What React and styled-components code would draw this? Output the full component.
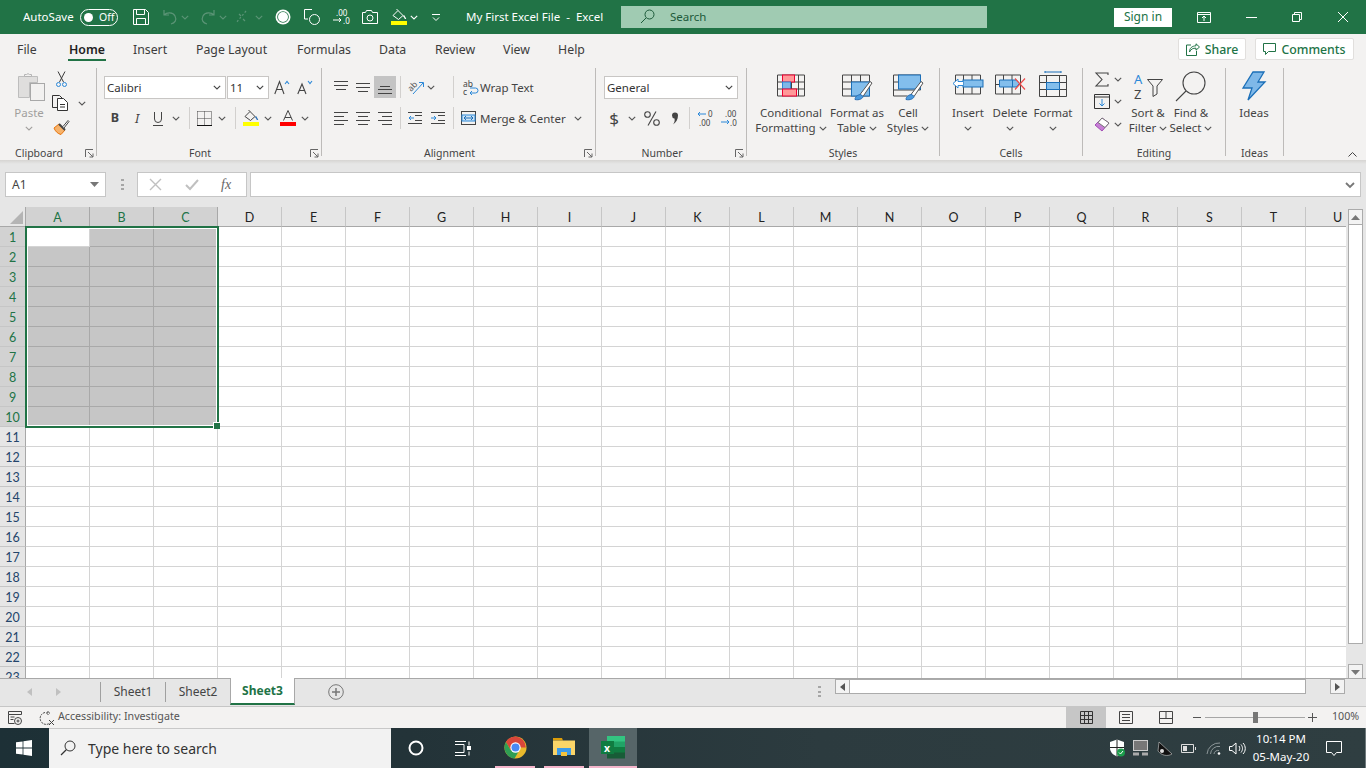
import React from "react";
import styled, { createGlobalStyle } from "styled-components";

const ui = `"Noto Sans", "Open Sans", sans-serif`;
const calibri = `Lato, "Noto Sans", sans-serif`;

const Global = createGlobalStyle`
  html, body { margin: 0; padding: 0; height: 768px; overflow: hidden; background: #e6e6e6; }
  * { box-sizing: border-box; }
  svg { display: block; overflow: visible; }
`;

const Page = styled.div`
  width: 1366px;
  height: 768px;
  display: flex;
  flex-direction: column;
  font-family: ${ui};
  overflow: hidden;
`;

// a fixed width thing in a row, $ml is the distance to what stands before it
const Item = styled.div`
  flex: none;
  display: flex;
  align-items: center;
  justify-content: center;
  width: ${(p) => p.$w}px;
  height: ${(p) => p.$h || 22}px;
  margin-left: ${(p) => p.$ml || 0}px;
  background: ${(p) => p.$bg || "transparent"};
`;

const TitleBar = styled.div`
  height: 34px;
  background: #217346;
  display: flex;
  align-items: center;
  padding-left: 23px;
  color: #fff;
  font-size: 11.5px;
`;
const TitleText = styled.div`
  flex: none;
  width: ${(p) => p.$w}px;
  margin-left: ${(p) => p.$ml || 0}px;
  margin-bottom: 2px;
  white-space: pre;
`;
const Toggle = styled.div`
  flex: none;
  width: 38px;
  height: 17px;
  margin-left: 7px;
  border: 1px solid #fff;
  border-radius: 9px;
  display: flex;
  align-items: center;
  padding: 0 0 1px 3px;
  gap: 6px;
  font-size: 10.5px;
  &::before {
    content: "";
    width: 9px;
    height: 9px;
    margin-top: 1px;
    border-radius: 50%;
    background: #fff;
  }
`;
const SearchBox = styled.div`
  flex: none;
  width: 366px;
  height: 22px;
  margin-left: 18px;
  background: #a0cbb2;
  color: #1d5a3a;
  display: flex;
  align-items: center;
  padding: 0 0 1px 19px;
  gap: 15px;
  font-size: 11.5px;
`;
const SignIn = styled.div`
  flex: none;
  width: 58px;
  height: 19px;
  margin-left: 127px;
  padding-bottom: 1px;
  background: #fff;
  color: #217346;
  font-size: 12px;
  display: flex;
  align-items: center;
  justify-content: center;
`;

const TabRow = styled.div`
  height: 32px;
  background: #f3f2f1;
  display: flex;
  align-items: flex-start;
  padding-right: 13px;
`;
const Tab = styled.div`
  flex: none;
  height: 27px;
  width: ${(p) => p.$w}px;
  margin-left: ${(p) => p.$ml}px;
  padding-top: 7px;
  font-size: 12.3px;
  line-height: 18px;
  color: ${(p) => (p.$on ? "#1f1f1f" : "#3c3c3c")};
  font-weight: ${(p) => (p.$on ? 600 : 400)};
  text-align: center;
  white-space: nowrap;
  border-bottom: 2px solid ${(p) => (p.$on ? "#217346" : "transparent")};
`;
const ActionBtn = styled.div`
  flex: none;
  height: 22px;
  margin-top: 4px;
  width: ${(p) => p.$w}px;
  margin-left: ${(p) => p.$ml}px;
  background: #fff;
  border: 1px solid #e1dfdd;
  border-radius: 2px;
  color: #217346;
  font-size: 12.3px;
  font-weight: 500;
  display: flex;
  align-items: center;
  justify-content: center;
  gap: 5px;
`;

const Ribbon = styled.div`
  height: 94px;
  background: #f3f2f1;
  display: flex;
`;
const Group = styled.div`
  flex: none;
  width: ${(p) => p.$w}px;
  height: 88px;
  margin-top: 2px;
  border-right: 1px solid #bdbbb9;
  display: flex;
  flex-direction: column;
`;
const GroupBody = styled.div`
  height: 79px;
  display: flex;
  margin-top: -2px;
  flex: none;
`;
const GroupLabel = styled.div`
  height: 16px;
  flex: none;
  display: flex;
  align-items: center;
  font-size: 10.5px;
  color: #444;
`;
const LabelText = styled.div`
  flex: 1;
  text-align: center;
  padding-right: ${(p) => (p.$pad ? 4 : 0)}px;
`;
const Launcher = styled.div`
  flex: none;
  width: 14px;
  display: flex;
  justify-content: center;
`;
const Rows = styled.div`
  display: flex;
  flex-direction: column;
  gap: 9px;
  padding-top: 10px;
  padding-left: ${(p) => p.$pl}px;
`;
const Row = styled.div`
  display: flex;
  align-items: center;
  height: 22px;
`;
const Combo = styled.div`
  flex: none;
  width: ${(p) => p.$w}px;
  height: 23px;
  margin-left: ${(p) => p.$ml || 0}px;
  background: #fff;
  border: 1px solid #c8c6c4;
  display: flex;
  align-items: center;
  justify-content: space-between;
  padding: 0 4px 0 2px;
  font-size: 11.5px;
  color: #333;
`;
const Sep = styled.div`
  flex: none;
  width: 1px;
  height: 22px;
  margin-left: ${(p) => p.$ml}px;
  background: #d2d0ce;
`;
const SmallText = styled.div`
  flex: none;
  width: ${(p) => p.$w}px;
  margin-left: ${(p) => p.$ml || 0}px;
  font-size: 11.5px;
  color: #444;
  white-space: nowrap;
`;
const Glyph = styled.span`
  font-size: ${(p) => p.$size}px;
  font-weight: ${(p) => (p.$bold ? 700 : 400)};
  font-style: ${(p) => (p.$italic ? "italic" : "normal")};
  color: #444;
  line-height: 1;
`;
const BigBtn = styled.div`
  flex: none;
  width: ${(p) => p.$w}px;
  margin-left: ${(p) => p.$ml || 0}px;
  display: flex;
  flex-direction: column;
  align-items: center;
  padding-top: 5px;
  font-size: 11.5px;
  line-height: 16px;
  color: ${(p) => (p.$off ? "#a19f9d" : "#444")};
  white-space: nowrap;
`;
const BigIcon = styled.div`
  height: 34px;
  padding-bottom: 4px;
  display: flex;
  align-items: flex-start;
  justify-content: center;
`;
const BigLine = styled.div`
  height: 15.5px;
  display: flex;
  align-items: center;
  gap: 3px;
`;
const SmallCol = styled.div`
  flex: none;
  margin-left: ${(p) => p.$ml}px;
  padding-top: 2px;
  display: flex;
  flex-direction: column;
  gap: ${(p) => p.$gap}px;
`;
const Collapse = styled.div`
  margin-left: auto;
  margin-right: 9px;
  margin-top: 85px;
  height: 6px;
`;
const RibbonEdge = styled.div`
  height: 4px;
  background: linear-gradient(#d6d4d2, #e6e6e6);
`;

const FormulaBar = styled.div`
  height: 43px;
  background: #e6e6e6;
  display: flex;
  padding: 8px 5px 0;
`;
const NameBox = styled.div`
  flex: none;
  width: 101px;
  height: 25px;
  background: #fff;
  border: 1px solid #c6c6c6;
  display: flex;
  align-items: center;
  justify-content: space-between;
  padding: 0 6px;
  font-size: 12px;
  color: #444;
`;
const Grip = styled.div`
  flex: none;
  width: 3px;
  margin-left: ${(p) => p.$ml}px;
  margin-top: ${(p) => p.$mt}px;
  height: 11px;
  background: repeating-linear-gradient(#a6a6a6 0 2px, transparent 2px 4.5px);
`;
const FxBox = styled.div`
  flex: none;
  width: 110px;
  height: 25px;
  margin-left: 13px;
  background: #fff;
  border: 1px solid #c6c6c6;
  display: flex;
  align-items: center;
`;
const FormulaInput = styled.div`
  flex: none;
  width: 1111px;
  height: 25px;
  margin-left: 3px;
  background: #fff;
  border: 1px solid #c6c6c6;
  display: flex;
  align-items: center;
  justify-content: flex-end;
  padding-right: 5px;
`;

const SheetArea = styled.div`
  height: 471px;
  display: flex;
  background: #e6e6e6;
`;
const GridWrap = styled.div`
  position: relative;
  flex: none;
  width: 1346px;
  height: 471px;
  overflow: hidden;
  background: #fff;
`;
const Grid = styled.div`
  display: grid;
  grid-template-columns: 26px repeat(21, 64px);
  grid-auto-rows: 20px;
`;
const Corner = styled.div`
  background: #e6e6e6;
  border-right: 1px solid #a8a8a8;
  border-bottom: 1px solid #a8a8a8;
  display: flex;
  align-items: flex-end;
  justify-content: flex-end;
  padding: 0 2px 2px 0;
`;
const ColHead = styled.div`
  background: ${(p) => (p.$sel ? "#d2d2d2" : "#e6e6e6")};
  color: ${(p) => (p.$sel ? "#217346" : "#222")};
  border-right: 1px solid ${(p) => (p.$sel ? "#a8a8a8" : "#c6c6c6")};
  border-bottom: 1px solid #a8a8a8;
  padding-top: 1px;
  font-family: ${calibri};
  font-size: 12.5px;
  display: flex;
  align-items: center;
  justify-content: center;
`;
const RowHead = styled.div`
  background: ${(p) => (p.$sel ? "#d2d2d2" : "#e6e6e6")};
  color: ${(p) => (p.$sel ? "#217346" : "#24456b")};
  border-right: 1px solid #a8a8a8;
  border-bottom: 1px solid #c6c6c6;
  padding-top: 1px;
  font-family: ${calibri};
  font-size: 12.5px;
  display: flex;
  align-items: center;
  justify-content: center;
`;
const Cell = styled.div`
  background: ${(p) => (p.$sel ? "#c6c6c6" : "#fff")};
  border-right: 1px solid ${(p) => (p.$sel ? "#a9a9a9" : "#d4d4d4")};
  border-bottom: 1px solid ${(p) => (p.$sel ? "#a9a9a9" : "#d4d4d4")};
`;
const Selection = styled.div`
  position: absolute;
  left: 25px;
  top: 19px;
  width: 194px;
  height: 202px;
  border: 2px solid #217346;
  box-shadow: inset 0 0 0 1px #fff;
  pointer-events: none;
  &::after {
    content: "";
    position: absolute;
    right: -3px;
    bottom: -3px;
    width: 6px;
    height: 6px;
    background: #217346;
    border: 1px solid #fff;
    border-width: 1px 0 0 1px;
  }
`;
const VScroll = styled.div`
  flex: none;
  width: 20px;
  padding: 2px 3px 0 2px;
  display: flex;
  flex-direction: column;
`;
const ScrollBtn = styled.div`
  flex: none;
  width: ${(p) => p.$w || 15}px;
  height: ${(p) => p.$h || 16}px;
  background: #f3f3f3;
  border: 1px solid #ababab;
  display: flex;
  align-items: center;
  justify-content: center;
`;
const VThumb = styled.div`
  flex: none;
  width: 15px;
  height: 419px;
  background: #fff;
  border: 1px solid #ababab;
  border-top: 0;
`;
const Spacer = styled.div`
  flex: none;
  height: ${(p) => p.$h}px;
`;

const SheetBar = styled.div`
  height: 29px;
  background: #e6e6e6;
  border-top: 1px solid #a8a8a8;
  border-bottom: 1px solid #c6c6c6;
  display: flex;
  align-items: flex-start;
`;
const SheetTab = styled.div`
  flex: none;
  width: 65px;
  margin-top: ${(p) => (p.$on ? -1 : 3)}px;
  height: ${(p) => (p.$on ? 27 : 20)}px;
  padding-bottom: ${(p) => (p.$on ? 0 : 1)}px;
  background: ${(p) => (p.$on ? "#fff" : "transparent")};
  color: ${(p) => (p.$on ? "#217346" : "#444")};
  font-weight: ${(p) => (p.$on ? 700 : 400)};
  border-left: 1px solid ${(p) => (p.$on ? "#a8a8a8" : "#a0a0a0")};
  border-right: ${(p) => (p.$on ? "1px solid #a8a8a8" : "0")};
  border-bottom: ${(p) => (p.$on ? "2px solid #217346" : "0")};
  font-size: 12px;
  display: flex;
  align-items: center;
  justify-content: center;
`;
const HTrack = styled.div`
  flex: none;
  width: 456px;
  height: 15px;
  background: #fff;
  border: 1px solid #ababab;
  border-left: 0;
`;

const StatusBar = styled.div`
  height: 21px;
  background: #f3f2f1;
  display: flex;
  align-items: center;
  font-size: 10.5px;
  color: #555;
`;
const StatusText = styled.div`
  flex: none;
  width: ${(p) => p.$w}px;
  margin-left: ${(p) => p.$ml}px;
  margin-bottom: 3px;
  font-size: 10.7px;
  white-space: nowrap;
  color: #555;
`;
const ZoomTrack = styled.div`
  position: relative;
  flex: none;
  width: 100px;
  height: 1px;
  margin-left: 4px;
  background: #a6a6a6;
  &::after {
    content: "";
    position: absolute;
    left: 48px;
    top: -5px;
    width: 5px;
    height: 11px;
    background: #777;
  }
`;

const Taskbar = styled.div`
  height: 40px;
  display: flex;
  align-items: center;
  color: #fff;
  border-right: 1px solid #6f7a7d;
  background: linear-gradient(90deg, #1d3036 0%, #233338 30%, #2c3b3f 60%, #2f3e41 100%);
`;
const TaskSearch = styled.div`
  flex: none;
  width: 342px;
  height: 40px;
  margin-left: 17px;
  padding: 0 0 1px 11px;
  background: #f2f2f2;
  border-top: 1px solid #c8c8c8;
  display: flex;
  align-items: center;
  gap: 12px;
  color: #333;
  font-size: 14px;
`;
const TaskApp = styled.div`
  flex: none;
  height: 40px;
  width: ${(p) => p.$w}px;
  margin-left: ${(p) => p.$ml}px;
  display: flex;
  align-items: center;
  justify-content: center;
  background: ${(p) => (p.$on ? "#566568" : "transparent")};
  border-bottom: 2px solid #f4b5cb;
`;
const Clock = styled.div`
  flex: none;
  width: 64px;
  margin-left: ${(p) => p.$ml}px;
  font-size: 11.5px;
  line-height: 18px;
  text-align: center;
  white-space: nowrap;
`;

const Chev = ({ c = "#555" }) => (
  <svg width="8" height="5" viewBox="0 0 8 5" fill="none" stroke={c} strokeWidth="1.1">
    <path d="M.8.8 4 4 7.2.8" />
  </svg>
);
const Launch = () => (
  <svg width="9" height="9" viewBox="0 0 9 9" fill="none" stroke="#666">
    <path d="M.5 8V.5H8M3 3l5 5M8 4.5V8H4.5" />
  </svg>
);
const S = ({ w = 16, h = 16, children, c = "#444", sw = 1, fill = "none" }) => (
  <svg width={w} height={h} viewBox={`0 0 ${w} ${h}`} fill={fill} stroke={c} strokeWidth={sw}>
    {children}
  </svg>
);

const dim = "#5b9476";

const ClipboardIco = () => (
  <svg width="32" height="30" viewBox="-4 0 32 30" fill="none" stroke="#b4b4b4">
    <path d="M1.5 5.5h19v6h-8v15h-11z" fill="#dfdedd" stroke="#bdbdbd" />
    <path d="M7.5 5.5v-2h2a2 2 0 0 1 3 0h2v2z" fill="#f3f2f1" />
    <rect x="13.5" y="12.5" width="14" height="17" fill="#f2f1f0" stroke="#a8a8a8" />
  </svg>
);
const Cut = () => (
  <S w={11} h={17} c="#3b3b3b">
    <path d="M2 .5 7.5 11M9 .5 3.5 11" />
    <circle cx="2.5" cy="13.5" r="2" stroke="#2b88d8" />
    <circle cx="8.5" cy="13.5" r="2" stroke="#2b88d8" />
  </S>
);
const Copy = () => (
  <S w={18} h={16} c="#333">
    <path d="M5.5 12.5h-5V.5h7l3 3" />
    <path d="M5.5 3.5h6l4 4v8h-10z" fill="#fff" />
    <path d="M8 9.5h5M8 12h5" />
  </S>
);
const Painter = () => (
  <svg width="17" height="16" viewBox="0 0 17 16" fill="none">
    <path d="M1 9l5-4 6 6-4 4.5C5 15 2 12 1 9z" fill="#f6b26b" stroke="#e8750c" />
    <path d="M6 5l6 6" stroke="#444" strokeWidth="2" />
    <path d="M10 7.5l5-6 1 1-5 6.5" fill="#fff" stroke="#444" />
  </svg>
);
const Grow = ({ up }) => (
  <svg width="16" height="16" viewBox="0 0 16 16" fill="none" stroke="#444" strokeWidth="1.1">
    <path d={up ? "M.8 15 5.5 2.5 10 15M2.5 10.5h6" : "M.8 15 5 5 9 15M2.3 11.5h5"} />
    <path d={up ? "M11 5 13 2.5 15 5" : "M11 2 13 4.5 15 2"} stroke="#2b88d8" />
  </svg>
);
const Borders = () => (
  <svg width="15" height="15" viewBox="0 0 15 15" fill="none" stroke="#444">
    <path d="M.5.5h14M.5.5v14M14.5.5v14M7.5.5v14M.5 7.5h14" strokeDasharray="1 1" />
    <path d="M0 14.5h15" stroke="#111" />
  </svg>
);
const Bucket = ({ c = "#444", bar = "#ffff00", drop = "#2b6fb5" }) => (
  <svg width="16" height="16" viewBox="0 0 16 16" fill="none" stroke={c}>
    <path d="M2 6.5 7 1.5l5 5-4.5 4z" />
    <path d="M7 1.5 5.5 0" />
    <path d="M12.5 6.5c1 1.5 2 2.5 2 3.5" stroke={drop} strokeWidth="1.4" />
    <rect x="0" y="12" width="16" height="4" fill={bar} stroke="none" />
  </svg>
);
const FontColor = () => (
  <svg width="16" height="16" viewBox="0 0 16 16" fill="none" stroke="#444">
    <path d="M3.5 10.5 8 .5l4.5 10M5 7.5h6" />
    <rect x="0" y="12" width="16" height="4" fill="#ff0000" stroke="none" />
  </svg>
);
const AlignIco = ({ rows }) => (
  <S w={14} h={14} c="#444">
    {rows.map(([y, a, b], i) => (
      <path key={i} d={`M${a} ${y}.5H${b}`} />
    ))}
  </S>
);
const Orientation = () => (
  <svg width="17" height="17" viewBox="0 0 17 17" fill="none">
    <text x="0" y="10" transform="rotate(-45 5 8)" fontFamily={ui} fontSize="8.5" fill="#555">ab</text>
    <path d="M5 15 15 4M11 3.5h4.5V8" stroke="#2b88d8" />
  </svg>
);
const Indent = ({ flip }) => (
  <svg width="14" height="14" viewBox="0 0 14 14" fill="none" stroke="#444">
    <path d="M0 1.5h14M0 12.5h14M7 4.5h7M7 9.5h7" />
    <path d={flip ? "M0 7h5M3 5l2 2-2 2" : "M6 7H1M3 5 1 7l2 2"} stroke="#2b88d8" />
  </svg>
);
const WrapIco = () => (
  <svg width="15" height="17" viewBox="0 0 15 17" fill="none">
    <text x="0" y="8" fontFamily={ui} fontSize="8.5" fill="#444">ab</text>
    <text x="0" y="16" fontFamily={ui} fontSize="8.5" fill="#444">c</text>
    <path d="M7 9h5.5a2.5 2.5 0 0 1 0 5H7M9 12l-2 2 2 2" stroke="#2b88d8" />
  </svg>
);
const MergeIco = () => (
  <svg width="15" height="14" viewBox="0 0 15 14" fill="none" stroke="#444">
    <rect x=".5" y=".5" width="14" height="13" />
    <rect x="1" y="4" width="13" height="6" fill="#cfe4f6" stroke="#2b88d8" />
    <path d="M3 7h9M5 5 3 7l2 2M10 5l2 2-2 2" stroke="#1b6fb8" />
  </svg>
);
const DecIco = ({ more }) => (
  <svg width="17" height="17" viewBox="0 0 17 17" fill="none">
    <text x={more ? 5 : 11} y="7" fontFamily={ui} fontSize="8" fill="#444">{more ? ".00" : "0"}</text>
    <text x={more ? 10 : 2} y="16" fontFamily={ui} fontSize="8" fill="#444">{more ? ".0" : ".00"}</text>
    <path d={more ? "M1 12h8M7 10l2 2-2 2" : "M9 4H1M3 2 1 4l2 2"} stroke="#2b88d8" />
  </svg>
);

const gridPaths = "M.5 2.5h27v21H.5zM.5 9.5h27M.5 16.5h27M7.5 2.5v21M14.5 2.5v21M21.5 2.5v21";
const CondFormat = () => (
  <svg width="28" height="26" viewBox="0 -1.5 28 26" fill="none" stroke="#444">
    <path d={gridPaths} />
    <rect x="5.5" y="2.5" width="12" height="7" fill="#f99" stroke="#e03" />
    <rect x="5.5" y="9.5" width="8" height="7" fill="#7fb8e8" stroke="#2b88d8" />
    <rect x="5.5" y="16.5" width="14" height="7" fill="#f99" stroke="#e03" />
  </svg>
);
const TableFormat = () => (
  <svg width="31" height="28" viewBox="0 -1.5 31 28" fill="none" stroke="#444">
    <path d="M.5 2.5h27v21H.5zM.5 9.5h27M9.5 2.5v21M18.5 2.5v21M.5 16.5h27" />
    <rect x="9.5" y="9.5" width="18" height="14" fill="#83beec" stroke="#1b6fb8" />
    <path d="M18 22 28 9l2 1.5L21 24z" fill="#fff" stroke="#555" />
    <path d="M13 27c0-3 3-5 6-5l2 2c0 2-4 4-8 3z" fill="#4b9ade" stroke="#2b6fb5" />
  </svg>
);
const CellStyle = () => (
  <svg width="31" height="28" viewBox="0 -1.5 31 28" fill="none" stroke="#444">
    <path d="M.5 2.5h27v15H.5zM.5 9.5h27" />
    <rect x="5.5" y="2.5" width="22" height="14" fill="#83beec" stroke="#1b6fb8" />
    <path d="M.5 17.5v6h14" />
    <path d="M18 22 28 9l2 1.5L21 24z" fill="#fff" stroke="#555" />
    <path d="M13 27c0-3 3-5 6-5l2 2c0 2-4 4-8 3z" fill="#4b9ade" stroke="#2b6fb5" />
  </svg>
);
const InsertIco = () => (
  <svg width="32" height="26" viewBox="0 -.5 32 26" fill="none" stroke="#444">
    <path d="M3.5 3.5h25v19h-25zM3.5 13h25M11.5 3.5v19M20 3.5v19" />
    <rect x="11" y="8.5" width="20" height="7" fill="#83beec" stroke="#1b6fb8" />
    <path d="M11 10H6V7.5L1 12l5 4.5V14h5" fill="#fff" stroke="#2b88d8" />
  </svg>
);
const DeleteIco = () => (
  <svg width="31" height="26" viewBox="0 -.5 31 26" fill="none" stroke="#444">
    <path d="M.5 3.5h25v19H.5zM.5 13h25M8.5 3.5v19M17 3.5v19" />
    <path d="M4.5 8.5h13v7h-13z" fill="#83beec" stroke="#1b6fb8" />
    <path d="M17.5 8.5h4l3 3.5-3 3.5h-4z" fill="#83beec" stroke="#1b6fb8" />
    <path d="M20 7l10 11M30 7 20 18" stroke="#f04a4a" strokeWidth="1.2" />
  </svg>
);
const FormatIco = () => (
  <svg width="28" height="28" viewBox="0 0 28 28" fill="none" stroke="#444">
    <path d="M.5 4.500h27v21H.5zM.5 11.500h27M.5 18.500h27M7.5 4.500v21M20.500 4.500v21" />
    <rect x="7.5" y="11.5" width="13" height="7" fill="#83beec" stroke="#1b6fb8" />
    <path d="M6 1h16M6 0v2M22 0v2" stroke="#1b6fb8" />
  </svg>
);
const Sum = () => (
  <S w={14} h={15} c="#444" sw={1.1}>
    <path d="M13 3V1H1l6 6.5L1 14h12v-2" />
  </S>
);
const FillDown = () => (
  <svg width="16" height="15" viewBox="0 0 16 15" fill="none" stroke="#333">
    <path d="M.5 .5h15v14H.5zM.5 3h15" />
    <path d="M8 5v7M5.5 9.5 8 12l2.5-2.5" stroke="#2b88d8" />
  </svg>
);
const Eraser = () => (
  <svg width="16" height="16" viewBox="0 0 16 16" fill="none" stroke="#a24cb5">
    <path d="M1 9l7-7 7 5-7 8z" fill="#c77fd6" />
    <path d="M8 2l7 5-4 4.5-7-5z" fill="#fff" stroke="#777" />
  </svg>
);
const SortIco = () => (
  <svg width="30" height="30" viewBox="0 0 30 30">
    <text x="1" y="13" fontFamily={ui} fontSize="13" fill="#2b88d8">A</text>
    <text x="1" y="28" fontFamily={ui} fontSize="13" fill="#444">Z</text>
    <path d="M14.5 8.5h15l-5.5 6.5v8l-4 2.5v-10.5z" fill="none" stroke="#444" />
  </svg>
);
const FindIco = () => (
  <svg width="32" height="31" viewBox="0 0 32 31" fill="none" stroke="#444" strokeWidth="1.1">
    <circle cx="19" cy="12" r="11" />
    <path d="M11 20 1 30" />
  </svg>
);
const Bolt = () => (
  <svg width="24" height="30" viewBox="0 0 24 30" fill="#7fb8e8" stroke="#1b6fb8" strokeWidth="1.3">
    <path d="M11 1h11l-6 10h7L6 29l4-12H1z" />
  </svg>
);
const ShareIco = () => (
  <svg width="14" height="13" viewBox="0 0 14 13" fill="none" stroke="#217346">
    <path d="M10 .8 13.5 4 10 7.2V5.200C7 5 5 6 3.5 9 3.5 5 6 3 10 2.800z" />
    <path d="M5 2H.5v10.5h10V8" />
  </svg>
);
const CommentIco = () => (
  <svg width="13" height="12" viewBox="0 0 13 12" fill="none" stroke="#217346">
    <path d="M.5.5h12v8h-7l-3 3v-3h-2z" />
  </svg>
);

const Win = () => (
  <svg width="16" height="16" viewBox="0 0 16 16" fill="#fff">
    <path d="M0 2.3 6.6 1.400V7.600H0zM7.400 1.300 16 0V7.600H7.400zM0 8.400H6.600V14.600L0 13.700zM7.400 8.400H16V16L7.400 14.700z" />
  </svg>
);
const Chrome = () => (
  <svg width="23" height="23" viewBox="0 0 24 24">
    <circle cx="12" cy="12" r="11.5" fill="#e9b92c" />
    <path d="M12 .5A11.5 11.5 0 0 0 2 6.300L7 14.800l5-2.800h10.800A11.500 11.500 0 0 0 12 .5z" fill="#d9463a" />
    <path d="M2 6.300a11.500 11.500 0 0 0 9 17.150L16.500 14 12 12l-5 2.800z" fill="#2f9e54" />
    <circle cx="12" cy="12" r="5.4" fill="#fff" />
    <circle cx="12" cy="12" r="4.2" fill="#4a89f3" />
  </svg>
);
const Folder = () => (
  <svg width="22" height="19" viewBox="0 0 22 19">
    <path d="M0 0h9l1 2.5H0z" fill="#dc9d0a" />
    <path d="M0 2.5h22V17H0z" fill="#fbd568" />
    <path d="M4 17v-7h14v7h-4v-3H8v3z" fill="#3d9be9" />
    <rect x="8" y="14" width="6" height="4" fill="#f5c33c" />
  </svg>
);
const ExcelIco = () => (
  <svg width="25" height="23" viewBox="0 0 25 23">
    <rect x="6" y="0" width="18" height="6" fill="#33c481" />
    <rect x="6" y="5.5" width="18" height="6" fill="#21a366" />
    <rect x="6" y="11" width="18" height="6" fill="#107c41" />
    <rect x="6" y="16.5" width="18" height="6" fill="#185c37" />
    <rect x="0" y="5" width="13" height="13" fill="#107c41" />
    <text x="3" y="15.5" fontFamily={ui} fontWeight="700" fontSize="10.5" fill="#fff">x</text>
  </svg>
);

const colNames = "ABCDEFGHIJKLMNOPQRSTU".split("");
const rowNums = Array.from({ length: 23 }, (_, i) => i + 1);

export default function App() {
  return (
    <Page>
      <Global />
      <TitleBar>
        <TitleText $w={50}>AutoSave</TitleText>
        <Toggle>Off</Toggle>
        <Item $ml={15} $w={16}>
          <S c="#fff" w={16} h={16}>
            <path d="M.5.5h12l3 3v12H.5zM3.5.5v5h8v-5M3.5 15.5v-6h9v6" />
          </S>
        </Item>
        <Item $ml={14} $w={14}>
          <S w={14} h={16} c={dim} sw={1.2}>
            <path d="M1 1v5h5M1 6c3-3 9-3 11 1s0 7-4 8" />
          </S>
        </Item>
        <Item $ml={4} $w={8}><Chev c={dim} /></Item>
        <Item $ml={12} $w={14}>
          <S w={14} h={16} c={dim} sw={1.2}>
            <path d="M13 1v5H8M13 6c-3-3-9-3-11 1s0 7 4 8" />
          </S>
        </Item>
        <Item $ml={4} $w={8}><Chev c={dim} /></Item>
        <Item $ml={8} $w={12}>
          <S w={12} h={14} c={dim} sw={1.2}>
            <path d="M11 1 1 13" strokeDasharray="2 2" />
            <path d="M4 4l2 2M8 9l2 2" />
          </S>
        </Item>
        <Item $ml={8} $w={8}><Chev c={dim} /></Item>
        <Item $ml={12} $w={16}>
          <svg width="16" height="16" viewBox="0 0 16 16">
            <circle cx="8" cy="8" r="7.5" fill="#fff" />
            <circle cx="8" cy="8" r="5.8" fill="#217346" />
            <circle cx="8" cy="8" r="5" fill="#fff" />
          </svg>
        </Item>
        <Item $ml={13} $w={16}>
          <S c="#fff" w={16} h={16}>
            <path d="M8 .5H.5V10H4" />
            <circle cx="10.5" cy="10.5" r="5" />
          </S>
        </Item>
        <Item $ml={13} $w={16}>
          <svg width="16" height="16" viewBox="0 0 16 16" fill="none" stroke="#fff">
            <text x="3" y="7" fontFamily={ui} fontSize="8" fill="#fff" stroke="none">.00</text>
            <text x="10" y="15" fontFamily={ui} fontSize="8" fill="#fff" stroke="none">.0</text>
            <path d="M0 11h8M6 9l2 2-2 2" />
          </svg>
        </Item>
        <Item $ml={13} $w={16}>
          <S c="#fff" w={16} h={14}>
            <path d="M.5 2.5h3l1-2h5l1 2h5v11H.5z" />
            <circle cx="8" cy="8" r="3" />
          </S>
        </Item>
        <Item $ml={13} $w={16}><Bucket c="#fff" drop="#fff" /></Item>
        <Item $ml={3} $w={8}><Chev c="#fff" /></Item>
        <Item $ml={13} $w={10}>
          <S w={8} h={7} c="#fff">
            <path d="M0 .5h8M1 3.5l3 3 3-3" />
          </S>
        </Item>
        <TitleText $ml={25} $w={137}>My First Excel File  -  Excel</TitleText>
        <SearchBox>
          <S w={15} h={15} c="#1d5a3a">
            <circle cx="9.5" cy="5.5" r="4.5" />
            <path d="M6 9 1 14" />
          </S>
          Search
        </SearchBox>
        <SignIn>Sign in</SignIn>
        <Item $ml={25} $w={14}>
          <S w={14} h={11} c="#fff">
            <path d="M.5.5h13v10H.5zM.5 2.5h13M7 9V4.5M5 6l2-2 2 2" />
          </S>
        </Item>
        <Item $ml={35} $w={11}>
          <S w={11} h={1} c="#fff"><path d="M0 .5h11" /></S>
        </Item>
        <Item $ml={35} $w={10}>
          <S w={10} h={10} c="#fff">
            <path d="M.5 2.5h7v7h-7zM2.5 2.5v-2h7v7h-2" />
          </S>
        </Item>
        <Item $ml={36} $w={10}>
          <S w={10} h={10} c="#fff"><path d="M0 0l10 10M10 0 0 10" /></S>
        </Item>
      </TitleBar>

      <TabRow>
        <Tab $ml={17} $w={18}>File</Tab>
        <Tab $ml={33} $w={38} $on>Home</Tab>
        <Tab $ml={27} $w={32}>Insert</Tab>
        <Tab $ml={31} $w={71}>Page Layout</Tab>
        <Tab $ml={30} $w={53}>Formulas</Tab>
        <Tab $ml={29} $w={27}>Data</Tab>
        <Tab $ml={29} $w={40}>Review</Tab>
        <Tab $ml={28} $w={27}>View</Tab>
        <Tab $ml={28} $w={27}>Help</Tab>
        <ActionBtn $ml={593} $w={68}><ShareIco />Share</ActionBtn>
        <ActionBtn $ml={9} $w={99}><CommentIco />Comments</ActionBtn>
      </TabRow>

      <Ribbon>
        <Group $w={97}>
          <GroupBody>
            <BigBtn $ml={10} $w={38} $off>
              <BigIcon><ClipboardIco /></BigIcon>
              <BigLine>Paste</BigLine>
              <BigLine><Chev c="#a19f9d" /></BigLine>
            </BigBtn>
            <SmallCol $ml={4} $gap={2}>
              <Row>
                <Item $ml={4} $w={11}><Cut /></Item>
              </Row>
              <Row>
                <Item $w={18}><Copy /></Item>
                <Item $ml={8} $w={8}><Chev /></Item>
              </Row>
              <Row>
                <Item $ml={1} $w={17}><Painter /></Item>
              </Row>
            </SmallCol>
          </GroupBody>
          <GroupLabel>
            <LabelText $pad>Clipboard</LabelText>
            <Launcher><Launch /></Launcher>
          </GroupLabel>
        </Group>

        <Group $w={225}>
          <GroupBody>
            <Rows $pl={7}>
              <Row>
                <Combo $w={122}>Calibri<Chev c="#444" /></Combo>
                <Combo $ml={1} $w={42}>11<Chev c="#444" /></Combo>
                <Item $ml={5} $w={16}><Grow up /></Item>
                <Item $ml={7} $w={16}><Grow /></Item>
              </Row>
              <Row>
                <Item $ml={6} $w={10}><Glyph $size={12.5} $bold>B</Glyph></Item>
                <Item $ml={12} $w={10}><Glyph $size={13} $italic>I</Glyph></Item>
                <Item $ml={11} $w={10}>
                  <S w={10} h={15} c="#444"><path d="M1.5 1v7a3.5 3.5 0 0 0 7 0V1M0 14.5h10" /></S>
                </Item>
                <Item $ml={9} $w={8}><Chev /></Item>
                <Sep $ml={9} />
                <Item $ml={7} $w={15}><Borders /></Item>
                <Item $ml={6} $w={8}><Chev /></Item>
                <Sep $ml={9} />
                <Item $ml={7} $w={16}><Bucket /></Item>
                <Item $ml={5} $w={8}><Chev /></Item>
                <Item $ml={8} $w={16}><FontColor /></Item>
                <Item $ml={5} $w={8}><Chev /></Item>
              </Row>
            </Rows>
          </GroupBody>
          <GroupLabel>
            <LabelText $pad>Font</LabelText>
            <Launcher><Launch /></Launcher>
          </GroupLabel>
        </Group>

        <Group $w={274}>
          <GroupBody>
            <Rows $pl={12}>
              <Row>
                <Item $w={14}><AlignIco rows={[[1, 0, 14], [5, 0, 14], [9, 2, 12]]} /></Item>
                <Item $ml={8} $w={14}><AlignIco rows={[[3, 0, 14], [7, 0, 14], [11, 2, 12]]} /></Item>
                <Item $ml={4} $w={22} $bg="#c4c4c4"><AlignIco rows={[[6, 2, 12], [9, 0, 14], [13, 0, 14]]} /></Item>
                <Sep $ml={4} />
                <Item $ml={7} $w={17}><Orientation /></Item>
                <Item $ml={2} $w={8}><Chev /></Item>
                <Sep $ml={18} />
                <Item $ml={9} $w={15}><WrapIco /></Item>
                <SmallText $ml={2} $w={53}>Wrap Text</SmallText>
              </Row>
              <Row>
                <Item $w={14}><AlignIco rows={[[1, 0, 14], [5, 0, 10], [9, 0, 14], [13, 0, 10]]} /></Item>
                <Item $ml={8} $w={14}><AlignIco rows={[[1, 0, 14], [5, 2, 12], [9, 0, 14], [13, 2, 12]]} /></Item>
                <Item $ml={8} $w={14}><AlignIco rows={[[1, 0, 14], [5, 4, 14], [9, 0, 14], [13, 4, 14]]} /></Item>
                <Sep $ml={8} />
                <Item $ml={7} $w={14}><Indent /></Item>
                <Item $ml={9} $w={14}><Indent flip /></Item>
                <Sep $ml={8} />
                <Item $ml={7} $w={15}><MergeIco /></Item>
                <SmallText $ml={4} $w={86}>Merge &amp; Center</SmallText>
                <Item $ml={8} $w={8}><Chev /></Item>
              </Row>
            </Rows>
          </GroupBody>
          <GroupLabel>
            <LabelText $pad>Alignment</LabelText>
            <Launcher><Launch /></Launcher>
          </GroupLabel>
        </Group>

        <Group $w={151}>
          <GroupBody>
            <Rows $pl={8}>
              <Row>
                <Combo $w={134}>General<Chev c="#444" /></Combo>
              </Row>
              <Row>
                <Item $ml={5} $w={10}><Glyph $size={17}>$</Glyph></Item>
                <Item $ml={9} $w={8}><Chev /></Item>
                <Item $ml={8} $w={16}>
                  <svg width="16" height="15" viewBox="0 0 16 15" fill="none" stroke="#444" strokeWidth="1.1">
                    <circle cx="3.5" cy="3.5" r="2.8" />
                    <circle cx="12.5" cy="11.5" r="2.8" />
                    <path d="M12 .5 4 14.5" />
                  </svg>
                </Item>
                <Item $ml={11} $w={8}>
                  <svg width="8" height="13" viewBox="0 0 8 13" fill="#444">
                    <path d="M1 3.5a3 3 0 1 1 6 0c0 4-2 7-5 9 1.5-2 2-4 1.5-6A3 3 0 0 1 1 3.5z" />
                  </svg>
                </Item>
                <Sep $ml={10} />
                <Item $ml={7} $w={17}><DecIco /></Item>
                <Item $ml={6} $w={17}><DecIco more /></Item>
              </Row>
            </Rows>
          </GroupBody>
          <GroupLabel>
            <LabelText $pad>Number</LabelText>
            <Launcher><Launch /></Launcher>
          </GroupLabel>
        </Group>

        <Group $w={193}>
          <GroupBody>
            <BigBtn $ml={6} $w={76}>
              <BigIcon><CondFormat /></BigIcon>
              <BigLine>Conditional</BigLine>
              <BigLine>Formatting<Chev /></BigLine>
            </BigBtn>
            <BigBtn $ml={2} $w={52}>
              <BigIcon><TableFormat /></BigIcon>
              <BigLine>Format as</BigLine>
              <BigLine>Table<Chev /></BigLine>
            </BigBtn>
            <BigBtn $ml={3} $w={44}>
              <BigIcon><CellStyle /></BigIcon>
              <BigLine>Cell</BigLine>
              <BigLine>Styles<Chev /></BigLine>
            </BigBtn>
          </GroupBody>
          <GroupLabel><LabelText>Styles</LabelText></GroupLabel>
        </Group>

        <Group $w={143}>
          <GroupBody>
            <BigBtn $ml={8} $w={40}>
              <BigIcon><InsertIco /></BigIcon>
              <BigLine>Insert</BigLine>
              <BigLine><Chev /></BigLine>
            </BigBtn>
            <BigBtn $ml={2} $w={40}>
              <BigIcon><DeleteIco /></BigIcon>
              <BigLine>Delete</BigLine>
              <BigLine><Chev /></BigLine>
            </BigBtn>
            <BigBtn $ml={3} $w={40}>
              <BigIcon><FormatIco /></BigIcon>
              <BigLine>Format</BigLine>
              <BigLine><Chev /></BigLine>
            </BigBtn>
          </GroupBody>
          <GroupLabel><LabelText>Cells</LabelText></GroupLabel>
        </Group>

        <Group $w={143}>
          <GroupBody>
            <SmallCol $ml={11} $gap={0.5}>
              <Row>
                <Item $ml={1} $w={14}><Sum /></Item>
                <Item $ml={5} $w={8}><Chev /></Item>
              </Row>
              <Row>
                <Item $w={16}><FillDown /></Item>
                <Item $ml={4} $w={8}><Chev /></Item>
              </Row>
              <Row>
                <Item $w={16}><Eraser /></Item>
                <Item $ml={4} $w={8}><Chev /></Item>
              </Row>
            </SmallCol>
            <BigBtn $ml={4} $w={44}>
              <BigIcon><SortIco /></BigIcon>
              <BigLine>Sort &amp;</BigLine>
              <BigLine>Filter<Chev /></BigLine>
            </BigBtn>
            <BigBtn $w={42}>
              <BigIcon><FindIco /></BigIcon>
              <BigLine>Find &amp;</BigLine>
              <BigLine>Select<Chev /></BigLine>
            </BigBtn>
          </GroupBody>
          <GroupLabel><LabelText>Editing</LabelText></GroupLabel>
        </Group>

        <Group $w={58}>
          <GroupBody>
            <BigBtn $ml={8} $w={40}>
              <BigIcon><Bolt /></BigIcon>
              <BigLine>Ideas</BigLine>
            </BigBtn>
          </GroupBody>
          <GroupLabel><LabelText>Ideas</LabelText></GroupLabel>
        </Group>

        <Collapse>
          <S w={9} h={6} c="#444"><path d="M.5 5.5 4.5 1.5l4 4" /></S>
        </Collapse>
      </Ribbon>
      <RibbonEdge />

      <FormulaBar>
        <NameBox>
          A1
          <svg width="9" height="5" viewBox="0 0 9 5" fill="#777"><path d="M0 0h9L4.5 5z" /></svg>
        </NameBox>
        <Grip $ml={15} $mt={7} />
        <FxBox>
          <Item $ml={10} $w={14}>
            <S w={11} h={11} c="#c0c0c0" sw={1.4}><path d="M0 0l11 11M11 0 0 11" /></S>
          </Item>
          <Item $ml={23} $w={14}>
            <S w={14} h={11} c="#c0c0c0" sw={2}><path d="M1 6l4 4 8-9" /></S>
          </Item>
          <Item $ml={22} $w={14}>
            <svg width="14" height="14" viewBox="0 0 14 14">
              <text x="0" y="11" fontFamily="Liberation Serif, serif" fontStyle="italic" fontSize="14" fill="#666">fx</text>
            </svg>
          </Item>
        </FxBox>
        <FormulaInput>
          <svg width="10" height="6" viewBox="0 0 10 6" fill="none" stroke="#777" strokeWidth="1.8"><path d="M1 1l4 4 4-4" /></svg>
        </FormulaInput>
      </FormulaBar>

      <SheetArea>
        <GridWrap>
          <Grid>
            <Corner>
              <svg width="13" height="13" viewBox="0 0 13 13" fill="#b4b4b4"><path d="M13 0v13H0z" /></svg>
            </Corner>
            {colNames.map((c, i) => (
              <ColHead key={c} $sel={i < 3}>{c}</ColHead>
            ))}
            {rowNums.map((r) => (
              <React.Fragment key={r}>
                <RowHead $sel={r <= 10}>{r}</RowHead>
                {colNames.map((c, i) => (
                  <Cell key={c} $sel={r <= 10 && i < 3 && !(r === 1 && i === 0)} />
                ))}
              </React.Fragment>
            ))}
          </Grid>
          <Selection />
        </GridWrap>
        <VScroll>
          <ScrollBtn>
            <svg width="9" height="5" viewBox="0 0 9 5" fill="#777"><path d="M4.5 0 9 5H0z" /></svg>
          </ScrollBtn>
          <VThumb />
          <Spacer $h={20} />
          <ScrollBtn>
            <svg width="9" height="5" viewBox="0 0 9 5" fill="#777"><path d="M0 0h9L4.5 5z" /></svg>
          </ScrollBtn>
        </VScroll>
      </SheetArea>

      <SheetBar>
        <Item $ml={26} $w={6} $h={26}>
          <svg width="5" height="8" viewBox="0 0 5 8" fill="#c0c0c0"><path d="M5 0v8L0 4z" /></svg>
        </Item>
        <Item $ml={23} $w={6} $h={26}>
          <svg width="5" height="8" viewBox="0 0 5 8" fill="#c0c0c0"><path d="M0 0v8l5-4z" /></svg>
        </Item>
        <Item $ml={39} $w={0} $h={26} />
        <SheetTab>Sheet1</SheetTab>
        <SheetTab>Sheet2</SheetTab>
        <SheetTab $on>Sheet3</SheetTab>
        <Item $ml={33} $w={16} $h={26}>
          <S c="#777" w={16} h={16}>
            <circle cx="8" cy="8" r="7.3" />
            <path d="M8 4v8M4 8h8" strokeWidth="1.5" />
          </S>
        </Item>
        <Grip $ml={474} $mt={7} />
        <Item $ml={14} $w={15} $h={15}>
          <ScrollBtn $w={15} $h={15}>
            <svg width="5" height="8" viewBox="0 0 5 8" fill="#555"><path d="M5 0v8L0 4z" /></svg>
          </ScrollBtn>
        </Item>
        <HTrack />
        <Item $ml={24} $w={15} $h={15}>
          <ScrollBtn $w={15} $h={15}>
            <svg width="5" height="8" viewBox="0 0 5 8" fill="#555"><path d="M0 0v8l5-4z" /></svg>
          </ScrollBtn>
        </Item>
      </SheetBar>

      <StatusBar>
        <Item $ml={8} $w={14} $h={14}>
          <S w={14} h={14} c="#444">
            <path d="M.5.5h13v3H.5zM.5 3.5v9h6M2.5 6h4M2.5 8.5h3" />
            <circle cx="10" cy="10" r="3.5" />
            <circle cx="10" cy="10" r="1" />
          </S>
        </Item>
        <Item $ml={17} $w={16} $h={16}>
          <S w={16} h={16} c="#444">
            <path d="M6 2.5A6 6 0 1 0 11 13M9 1v4M7 3h4" strokeDasharray="2 1" />
            <path d="M10 10l5 5M15 10l-5 5" />
          </S>
        </Item>
        <StatusText $ml={3} $w={125}>Accessibility: Investigate</StatusText>
        <Item $ml={883} $w={40} $h={21} $bg="#c6c6c6">
          <S w={13} h={13} c="#333">
            <path d="M.5.5h12v12H.5zM.5 4.5h12M.5 8.5h12M4.5.5v12M8.5.5v12" />
          </S>
        </Item>
        <Item $w={40} $h={21}>
          <S w={14} h={13} c="#444">
            <path d="M.5.5h13v12H.5zM3 3.5h8M3 6.5h8M3 9.5h8" />
          </S>
        </Item>
        <Item $w={40} $h={21}>
          <S w={14} h={13} c="#444">
            <path d="M.5.5h13v12H.5zM.5 7.5h13M7 .5v7" />
          </S>
        </Item>
        <Item $ml={6} $w={9} $h={21}>
          <S w={8} h={1} c="#555"><path d="M0 .5h8" /></S>
        </Item>
        <ZoomTrack />
        <Item $ml={3} $w={9} $h={21}>
          <S w={9} h={9} c="#555"><path d="M0 4.5h9M4.5 0v9" /></S>
        </Item>
        <StatusText $ml={15} $w={30}>100%</StatusText>
      </StatusBar>

      <Taskbar>
        <Item $ml={16} $w={16} $h={16}><Win /></Item>
        <TaskSearch>
          <S w={16} h={16} c="#333">
            <circle cx="10" cy="6" r="5" />
            <path d="M6.5 9.5 1 15" strokeWidth="1.3" />
          </S>
          Type here to search
        </TaskSearch>
        <Item $ml={17} $w={16} $h={16}>
          <S w={16} h={16} c="#fff" sw={2}><circle cx="8" cy="8" r="6.5" /></S>
        </Item>
        <Item $ml={31} $w={18} $h={16}>
          <S w={18} h={15} c="#fff">
            <path d="M0 3.5h9v8H0M0 .5h11M0 14.5h11M14 .5v4M14 10.5v4" />
            <rect x="12.5" y="5.5" width="3" height="3" fill="#fff" />
          </S>
        </Item>
        <TaskApp $ml={22} $w={40}><Chrome /></TaskApp>
        <TaskApp $ml={9} $w={40}><Folder /></TaskApp>
        <TaskApp $ml={5} $w={48} $on><ExcelIco /></TaskApp>
        <Item $ml={472} $w={16} $h={17}>
          <svg width="16" height="18" viewBox="0 0 16 18">
            <path d="M8 .5 15 3v6c0 4-3 7-7 8.5C4 16 1 13 1 9V3z" fill="#fff" />
            <path d="M8 .5v17M1 8.5h14" stroke="#222" />
            <circle cx="12" cy="13.5" r="4" fill="#1a9c4a" />
            <path d="M10 13.5l1.5 1.5 2.5-3" stroke="#fff" fill="none" />
          </svg>
        </Item>
        <Item $ml={8} $w={15} $h={17}>
          <svg width="15" height="16" viewBox="0 0 15 16">
            <rect x=".5" y=".5" width="14" height="10" fill="#777" stroke="#ccc" />
            <rect x="0" y="12.5" width="6" height="3" fill="#aaa" />
            <rect x="9" y="12.5" width="6" height="3" fill="#aaa" />
          </svg>
        </Item>
        <Item $ml={9} $w={16} $h={17}>
          <svg width="16" height="17" viewBox="0 0 16 17">
            <path d="M2 2 15 14c-5 3-11 1-14-3z" fill="#111" stroke="#ccc" strokeWidth=".6" />
            <circle cx="5" cy="11" r="2" fill="#ddd" />
          </svg>
        </Item>
        <Item $ml={8} $w={15} $h={17}>
          <S w={15} h={9} c="#ddd">
            <path d="M.5.5h12v8H.5zM14.5 3v3" />
            <rect x="2" y="2" width="4" height="5" fill="#ddd" stroke="none" />
          </S>
        </Item>
        <Item $ml={10} $w={15} $h={17}>
          <S w={15} h={13} c="#8d9799">
            <path d="M1 12A12 12 0 0 1 14 1M4.5 12A8 8 0 0 1 14 4.5M8 12a4 4 0 0 1 5-3.5" />
            <circle cx="13" cy="11.5" r="1.3" fill="#fff" stroke="none" />
          </S>
        </Item>
        <Item $ml={8} $w={16} $h={17}>
          <S w={16} h={13} c="#fff">
            <path d="M.5 4.5h2.5L7 1v11L3 8.5H.5zM10 4c1 1.5 1 3.5 0 5M12 2.5c2 2.5 2 5.5 0 8M14 1c3 3 3 8 0 11" />
          </S>
        </Item>
        <Clock $ml={4}>
          10:14 PM
          <br />
          05-May-20
        </Clock>
        <Item $ml={13} $w={16} $h={16}>
          <S w={16} h={15} c="#fff">
            <path d="M.5.5h15v11H10.5L8 14.5 5.5 11.5H.5z" />
          </S>
        </Item>
      </Taskbar>
    </Page>
  );
}
